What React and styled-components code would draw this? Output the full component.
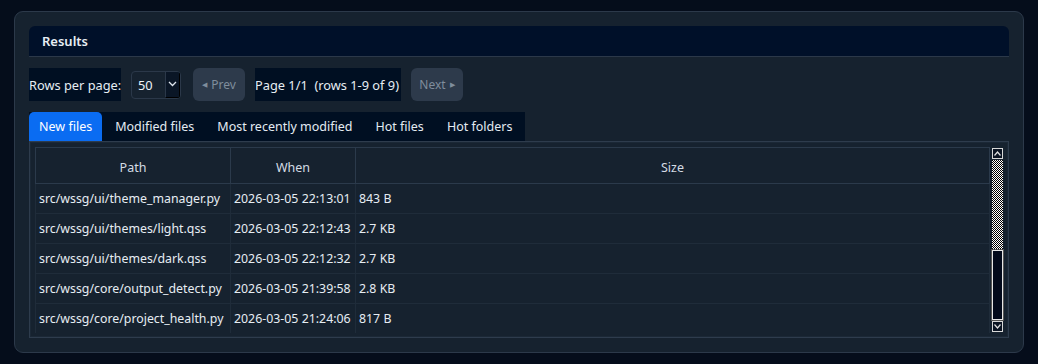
import React from "react";
import styled, { createGlobalStyle } from "styled-components";

const Global = createGlobalStyle`
  html, body { margin: 0; padding: 0; background: #050d1b; }
  body { font-family: "Noto Sans", "Open Sans", sans-serif; font-size: 12.5px; color: #e4ebf2; }
  * { box-sizing: border-box; }
`;

const Page = styled.div`
  width: 1038px;
  height: 364px;
  padding: 11px 14px 11px 14px;
`;

const Panel = styled.div`
  width: 1010px;
  height: 342px;
  background: #16222f;
  border: 1px solid #2c394a;
  border-radius: 9px;
  padding: 14px 14px 14px 14px;
  display: flex;
  flex-direction: column;
`;

const Header = styled.div`
  height: 31px;
  background: #001029;
  border-radius: 6px 6px 0 0;
  border-bottom: 1px solid #2b3849;
  display: flex;
  align-items: center;
  padding-left: 13px;
  font-weight: 600;
  font-size: 13px;
  color: #e8eef4;
`;

const Controls = styled.div`
  margin-top: 11px;
  height: 33px;
  display: flex;
  align-items: center;
  gap: 10px;
  font-size: 12.8px;
`;

const Label = styled.div`
  width: ${(p) => p.$w}px;
  height: 33px;
  background: #000f22;
  display: flex;
  align-items: center;
  white-space: pre;
  color: #e6edf3;
`;

const Combo = styled.div`
  width: 50px;
  height: 28px;
  margin-right: 2px;
  border: 1px solid #2b3849;
  border-radius: 4px;
  background: #16222f;
  display: flex;
  overflow: hidden;
`;

const ComboValue = styled.div`
  flex: 1;
  display: flex;
  align-items: center;
  padding-left: 6px;
  color: #eef3f8;
`;

const ComboArrow = styled.div`
  width: 15px;
  background: #0a1626;
  border-left: 1px solid #2b3849;
  border-bottom: 1px solid #000;
  border-right: 1px solid #000;
  display: flex;
  align-items: center;
  justify-content: center;
`;

const NavButton = styled.div`
  width: 52px;
  height: 33px;
  border-radius: 6px;
  background: #2d3a4b;
  color: #7f8d9c;
  display: flex;
  align-items: center;
  justify-content: center;
  gap: 4px;
  font-size: 12px;
`;

const Tri = styled.span`
  font-size: 7px;
  color: #7f8d9c;
`;

const TabBar = styled.div`
  margin-top: 11px;
  height: 29px;
  display: flex;
  align-self: flex-start;
  gap: 3px;
  background: #000f22;
  padding-right: 3px;
`;

const Tab = styled.div`
  height: 29px;
  padding: 0 10px;
  display: flex;
  align-items: center;
  border-radius: 5px 5px 0 0;
  background: ${(p) => (p.$active ? "#0a6cf2" : "transparent")};
  color: ${(p) => (p.$active ? "#ffffff" : "#e4ebf2")};
`;

const Frame = styled.div`
  height: 197px;
  border: 1px solid #2e3c4d;
  box-shadow: inset 0 0 0 1px #1b2836;
  padding: 5px 4px 4px 5px;
  display: flex;
`;

const Table = styled.div`
  flex: 1;
  display: flex;
  flex-direction: column;
  overflow: hidden;
  font-size: 12.35px;
`;

const Row = styled.div`
  display: grid;
  grid-template-columns: 196px 125px 1fr;
  height: ${(p) => (p.$head ? 37 : 30)}px;
  flex-shrink: 0;
`;

const HeadCell = styled.div`
  display: flex;
  align-items: center;
  justify-content: center;
  border: 1px solid #2b3a4b;
  border-left-width: ${(p) => (p.$first ? 1 : 0)}px;
  color: #d4dce4;
  padding-top: 3px;
  font-size: 12.5px;
`;

const Cell = styled.div`
  display: flex;
  align-items: center;
  padding-left: 3px;
  border-bottom: 1px solid #1f2c3a;
  border-right: 1px solid #1f2c3a;
  border-left: ${(p) => (p.$first ? "1px solid #1f2c3a" : "none")};
  color: #e6edf3;
  white-space: nowrap;
`;

const ScrollBar = styled.div`
  width: 13px;
  margin-left: 1px;
  display: flex;
  flex-direction: column;
  background: #16222f;
`;

const ScrollBtn = styled.div`
  width: 11px;
  height: 11px;
  margin: 1px 1px 0 1px;
  border: 1px solid #d8d8d8;
  background: #0a1322;
  display: flex;
  align-items: center;
  justify-content: center;
`;

const Track = styled.div`
  height: ${(p) => p.$h}px;
  margin: 1px 1px 0 1px;
  background: repeating-conic-gradient(#ffffff 0% 25%, #000000 0% 50%) 0 0 / 2px 2px;
`;

const Handle = styled.div`
  height: ${(p) => p.$h}px;
  margin: 1px 1px 0 1px;
  border: 1px solid #e6e6e6;
  background: #02091a;
  box-shadow: 0 0 0 1px #555;
`;

const rows = [
  ["src/wssg/ui/theme_manager.py", "2026-03-05 22:13:01", "843 B"],
  ["src/wssg/ui/themes/light.qss", "2026-03-05 22:12:43", "2.7 KB"],
  ["src/wssg/ui/themes/dark.qss", "2026-03-05 22:12:32", "2.7 KB"],
  ["src/wssg/core/output_detect.py", "2026-03-05 21:39:58", "2.8 KB"],
  ["src/wssg/core/project_health.py", "2026-03-05 21:24:06", "817 B"],
];

const tabs = ["New files", "Modified files", "Most recently modified", "Hot files", "Hot folders"];

export default function App() {
  return (
    <Page>
      <Global />
      <Panel>
        <Header>Results</Header>
        <Controls>
          <Label $w={92}>Rows per page:</Label>
          <Combo>
            <ComboValue>50</ComboValue>
            <ComboArrow>
              <svg width="9" height="6" viewBox="0 0 9 6">
                <path d="M1 1 L4.5 4.5 L8 1" fill="none" stroke="#dfe6ee" strokeWidth="1.3" />
              </svg>
            </ComboArrow>
          </Combo>
          <NavButton>
            <Tri>◀</Tri>Prev
          </NavButton>
          <Label $w={146}>{"Page 1/1  (rows 1-9 of 9)"}</Label>
          <NavButton>
            Next<Tri>▶</Tri>
          </NavButton>
        </Controls>
        <TabBar>
          {tabs.map((t, i) => (
            <Tab key={t} $active={i === 0}>
              {t}
            </Tab>
          ))}
        </TabBar>
        <Frame>
          <Table>
            <Row $head>
              <HeadCell $first>Path</HeadCell>
              <HeadCell>When</HeadCell>
              <HeadCell>Size</HeadCell>
            </Row>
            {rows.map((r) => (
              <Row key={r[0]}>
                <Cell $first>{r[0]}</Cell>
                <Cell>{r[1]}</Cell>
                <Cell>{r[2]}</Cell>
              </Row>
            ))}
          </Table>
          <ScrollBar>
            <ScrollBtn>
              <svg width="7" height="5" viewBox="0 0 7 5">
                <path d="M0.5 4.5 L3.5 1 L6.5 4.5" fill="none" stroke="#e0e0e0" strokeWidth="1.2" />
              </svg>
            </ScrollBtn>
            <Track $h={89} />
            <Handle $h={70} />
            <ScrollBtn>
              <svg width="7" height="5" viewBox="0 0 7 5">
                <path d="M0.5 0.5 L3.5 4 L6.5 0.5" fill="none" stroke="#e0e0e0" strokeWidth="1.2" />
              </svg>
            </ScrollBtn>
          </ScrollBar>
        </Frame>
      </Panel>
    </Page>
  );
}
